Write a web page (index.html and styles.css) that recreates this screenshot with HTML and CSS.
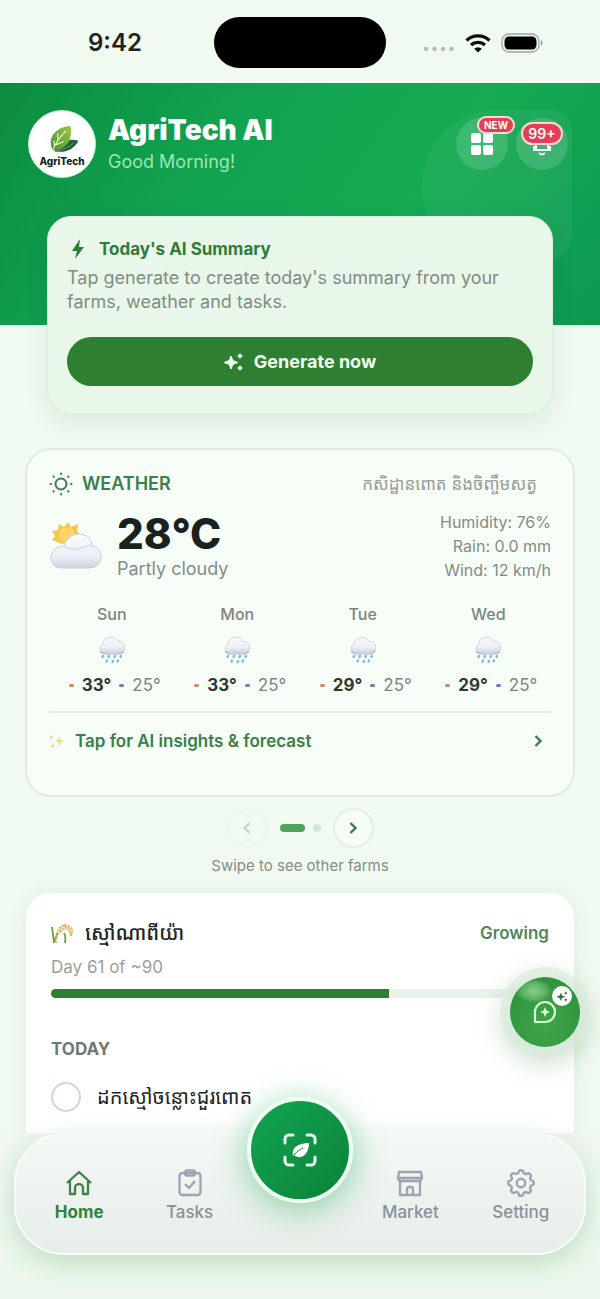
FILE: index.html
```html
<!DOCTYPE html>
<html lang="en">
<head>
<meta charset="utf-8">
<meta name="viewport" content="width=device-width, initial-scale=1">
<title>AgriTech AI</title>
<link rel="stylesheet" href="styles.css">
</head>
<body>
<svg class="defs" width="0" height="0" aria-hidden="true">
  <defs>
    <linearGradient id="cloud" x1="0" y1="0" x2="0" y2="1"><stop offset="0" stop-color="#fafbfd"/><stop offset=".65" stop-color="#eceff6"/><stop offset="1" stop-color="#cdd2df"/></linearGradient>
    <linearGradient id="leaf" x1="0" y1="1" x2="1" y2="0"><stop offset="0" stop-color="#4e9136"/><stop offset="1" stop-color="#97c73f"/></linearGradient>
    <symbol id="rain" viewBox="0 0 28 28">
      <path d="M5 17a5 5 0 0 1 0-9A8 8 0 0 1 20 5.500 6 6 0 0 1 23 17z" fill="url(#cloud)" stroke="#c9ced8" stroke-width=".8"/>
      <path d="M2 15q2 3 6 3h12q4 0 6-3" fill="none" stroke="#a9b5c6" stroke-width="1.200"/>
      <path d="M5 20l-.5 1M11 20l-.5 1M17 20l-.5 1M23 20l-.5 1M9 24.500l-.5 1M15 25l-.5 1M20 24.500l-.5 1" stroke="#73b6df" stroke-width="2.200" stroke-linecap="round"/>
    </symbol>
    <symbol id="chevron" viewBox="0 0 12 16"><path d="M3.500 3l5 5-5 5" fill="none" stroke="currentColor" stroke-width="2.400"/></symbol>
    <symbol id="sparkle" viewBox="0 0 20 20"><path d="M7 4l1.900 4.600L14 10.500l-5.100 1.900L7 17l-1.900-4.600L0 10.500l5.100-1.900z" fill="currentColor" stroke="currentColor"/><path d="M16 1l1.200 1.800L19 4l-1.800 1.200L16 7l-1.200-1.800L13 4l1.800-1.200zM16 13l1.200 1.800L19 16l-1.800 1.200L16 19l-1.200-1.800L13 16l1.800-1.200z" fill="currentColor"/></symbol>
  </defs>
</svg>
<div class="app">
  <div class="status">
    <time class="clock">9:42</time>
    <div class="island"></div>
    <div class="signals">
      <svg width="32" height="6" viewBox="0 0 32 6" fill="#b9bdb9"><circle cx="3" cy="3" r="2.300"/><circle cx="11.500" cy="3" r="2.300"/><circle cx="20" cy="3" r="2.300"/><circle cx="28.500" cy="3" r="2.300"/></svg>
      <svg class="wifi" width="26" height="20" viewBox="0 0 26 20" fill="none" stroke="#0b0f0c" stroke-width="3.400"><path d="M1.500 7.500a16.500 16.500 0 0 1 23 0M6 12a10.500 10.500 0 0 1 14 0"/><path d="M13 19.500l-3.800-3.700a5.500 5.500 0 0 1 7.600 0z" fill="#0b0f0c" stroke="none"/></svg>
      <svg width="43" height="20" viewBox="0 0 43 20"><rect x="1" y="1" width="37" height="18" rx="7" fill="none" stroke="#b4b9b4" stroke-width="1.800"/><rect x="3.500" y="3.500" width="32" height="13" rx="4.500" fill="#000"/><path d="M40 7q3 3 0 6z" fill="#8c918c"/></svg>
    </div>
  </div>

  <main class="content">
    <header class="hero">
      <div class="glow"></div>
      <div class="logo">
        <svg width="46" height="32" viewBox="0 0 46 32" aria-hidden="true"><path d="M14 31C27 33 37 29 43 18c-12-3-23 0-29 13z" fill="#23613f"/><path d="M12 30C4 15 15 2 33 0c4 17-5 29-21 30z" fill="url(#leaf)"/><path d="M11 31Q18 15 28 6M14 25l-1-7M18 18V9M16 23l9-4" fill="none" stroke="#edf7d6" stroke-width="1.300"/><path d="M15 31q14-3 22-10" fill="none" stroke="#72a37b"/></svg>
        <span>AgriTech</span>
      </div>
      <div class="brand">
        <h1>AgriTech AI</h1>
        <p>Good Morning!</p>
      </div>
      <div class="actions">
        <button class="round" aria-label="Apps"><svg width="22" height="22" viewBox="0 0 22 22" fill="#fff"><rect width="10" height="10" rx="2"/><rect x="12" width="10" height="10" rx="2"/><rect y="12" width="10" height="10" rx="2"/><rect x="12" y="12" width="10" height="10" rx="2"/></svg><span class="badge new">NEW</span></button>
        <button class="round" aria-label="Notifications"><svg width="22" height="24" viewBox="0 0 22 24" fill="none" stroke="#fff" stroke-width="2"><path d="M5 17V9a6 6 0 0 1 12 0v8M3 14v4h16v-4M8 21q3 3 6 0"/></svg><span class="badge count">99+</span></button>
      </div>
    </header>

    <section class="summary">
      <h2><svg width="22" height="22" viewBox="0 0 22 22" fill="currentColor" aria-hidden="true"><path d="M13 1L5 13h5l-2 8 9-12h-5z"/></svg>Today's AI Summary</h2>
      <p>Tap generate to create today's summary from your farms, weather and tasks.</p>
      <button class="generate"><svg width="20" height="20" aria-hidden="true"><use href="#sparkle"/></svg>Generate now</button>
    </section>

    <section class="weather">
      <div class="row">
        <h2><svg width="24" height="24" viewBox="0 0 24 24" fill="none" stroke="currentColor" stroke-width="2" stroke-linecap="round" aria-hidden="true"><circle cx="12" cy="12" r="5.500"/><path d="M12 1.500v.5M12 22v.5M1.500 12h.5M22 12h.5M4.500 4.500l.4.400M19.100 19.100l.4.400M4.500 19.500l.4-.4M19.100 4.900l.4-.4"/></svg>WEATHER</h2>
        <span class="place" lang="km">កសិដ្ឋានពោត និងចិញ្ចឹមសត្វ</span>
      </div>
      <div class="now">
        <svg width="54" height="48" viewBox="0 0 54 48" aria-hidden="true"><path d="M19 0l3 5 7-3-1 7 3 4-18 9-7-3-3-1 3-4-3-5 6-1 1-6 5 3z" fill="#f6c64b"/><circle cx="18" cy="13" r="8" fill="#fbd367"/><path d="M11 46a10 10 0 0 1-5-18q2-4 9-4 4-12 15-12 12 0 13 12 10 2 9 12-1 9-11 10z" fill="url(#cloud)" stroke="#cbd0dc"/><path d="M15 24q7 5 17 2 9-4 11-2" fill="none" stroke="#dfe2eb" stroke-width="2"/></svg>
        <div class="temperature"><strong>28°C</strong><span>Partly cloudy</span></div>
        <div class="details"><span>Humidity: 76%</span><span>Rain: 0.0 mm</span><span>Wind: 12 km/h</span></div>
      </div>
      <div class="days">
        <div class="day"><b>Sun</b><svg width="28" height="28"><use href="#rain"/></svg><p><i class="hi"></i><strong>33°</strong><i class="lo"></i>25°</p></div>
        <div class="day"><b>Mon</b><svg width="28" height="28"><use href="#rain"/></svg><p><i class="hi"></i><strong>33°</strong><i class="lo"></i>25°</p></div>
        <div class="day"><b>Tue</b><svg width="28" height="28"><use href="#rain"/></svg><p><i class="hi"></i><strong>29°</strong><i class="lo"></i>25°</p></div>
        <div class="day"><b>Wed</b><svg width="28" height="28"><use href="#rain"/></svg><p><i class="hi"></i><strong>29°</strong><i class="lo"></i>25°</p></div>
      </div>
      <a class="insights" href="#"><svg class="gold" width="16" height="18" viewBox="0 0 20 20" aria-hidden="true"><path d="M13 4l1.500 4.500L19 10l-4.500 1.500L13 17l-1.500-5.500L7 10l4.500-1.500zM3 2l1 2.500L6 5 4 6 3 9 2 6 0 5l2-.5zM5 13l1 2 2 1-2 1-1 2-1-2-2-1 2-1z" fill="currentColor"/></svg><span>Tap for AI insights &amp; forecast</span><svg class="go" width="12" height="16"><use href="#chevron"/></svg></a>
    </section>

    <div class="pager">
      <button class="page prev" aria-label="Previous farm"><svg width="12" height="16" viewBox="0 0 12 16"><path d="M8.500 3l-5 5 5 5" fill="none" stroke="currentColor" stroke-width="2.400"/></svg></button>
      <span class="dash"></span><span class="dot"></span>
      <button class="page" aria-label="Next farm"><svg width="12" height="16"><use href="#chevron"/></svg></button>
    </div>
    <p class="hint">Swipe to see other farms</p>

    <section class="farm">
      <div class="row">
        <h2 lang="km"><svg width="22" height="22" viewBox="0 0 22 22" fill="none" stroke-width="1.800" aria-hidden="true"><path d="M3 21Q2 12 1 5M3 21q2-7 4-10M14 21q1-7-1-10" stroke="#719c4a"/><path d="M5 21Q6 2 15 4t5 8M9 10q3-5 8-3 3 3 3 7M14 4l-1-3M17 5l2-2" stroke="#dfb76a" stroke-dasharray="2 1" stroke-width="2.500"/></svg>ស្មៅណាពីយ៉ា</h2>
        <span class="stage">Growing</span>
      </div>
      <p class="age">Day 61 of ~90</p>
      <div class="track" role="progressbar" aria-label="Growth" aria-valuenow="61" aria-valuemin="0" aria-valuemax="90"><div class="fill" style="width: 67.800%"></div></div>
      <h3>TODAY</h3>
      <label class="task"><input type="checkbox"><span lang="km">ដកស្មៅចន្លោះជួរពោត</span></label>
    </section>
  </main>

  <button class="chat" aria-label="Ask the assistant">
    <svg width="26" height="26" viewBox="0 0 26 26" fill="none" stroke="#d9ffd9" stroke-width="2.200" aria-hidden="true"><path d="M3 23V13a10 10 0 1 1 10 10z" stroke-linejoin="round"/><path d="M13 8l1.500 3.500L18 13l-3.500 1.500L13 18l-1.500-3.500L8 13l3.500-1.500z" fill="#d9ffd9" stroke="none"/></svg>
    <span class="spark"><svg width="11" height="11"><use href="#sparkle" width="11" height="11"/></svg></span>
  </button>

  <div class="dock">
    <nav class="nav">
      <a class="tab active" href="#"><svg width="28" height="28" viewBox="0 0 28 28"><path d="M2 14L14 3l12 11M5 12v13h5v-6a4 4 0 0 1 8 0v6h5V12"/></svg>Home</a>
      <a class="tab" href="#"><svg width="28" height="28" viewBox="0 0 28 28"><rect x="3.500" y="4" width="21" height="22" rx="3"/><rect x="9" y="1.500" width="10" height="5" rx="2"/><path d="M9 15l4 4 6-7"/></svg>Tasks</a>
      <button class="scan" aria-label="Scan a plant"><svg width="34" height="34" viewBox="0 0 34 34" fill="none" stroke="#e8fff0" stroke-width="3" stroke-linecap="round"><path d="M2 10V6a4 4 0 0 1 4-4h4M24 2h4a4 4 0 0 1 4 4v4M32 24v4a4 4 0 0 1-4 4h-4M10 32H6a4 4 0 0 1-4-4v-4"/><path d="M10 23C8 15 15 10 26 10c0 10-6 17-14 13z" fill="#fff" stroke="none"/><path d="M9 25q4-7 11-10" stroke="#0d9a45" stroke-width="1"/></svg></button>
      <a class="tab" href="#"><svg width="28" height="28" viewBox="0 0 28 28"><path d="M3 3h22l1 6q-1 3-3 3H5Q2 12 2 9zM2 9h24M4 12v14h20V12M11 26v-6q0-2 2-2h2q2 0 2 2v6"/></svg>Market</a>
      <a class="tab" href="#"><svg width="30" height="30" viewBox="0 0 24 24" class="gear"><path d="M10.300 4.300c.4-1.800 3-1.800 3.400 0a1.700 1.700 0 0 0 2.600 1.100c1.500-.9 3.300.8 2.400 2.400a1.700 1.700 0 0 0 1 2.500c1.800.4 1.800 3 0 3.400a1.700 1.700 0 0 0-1 2.600c.9 1.500-.9 3.300-2.400 2.400a1.700 1.700 0 0 0-2.600 1c-.4 1.800-3 1.800-3.400 0a1.700 1.700 0 0 0-2.600-1c-1.500.9-3.300-.9-2.400-2.400a1.700 1.700 0 0 0-1-2.600c-1.800-.4-1.800-3 0-3.400a1.700 1.700 0 0 0 1-2.600c-.9-1.500.9-3.300 2.400-2.400 1 .6 2.300.1 2.600-1z"/><circle cx="12" cy="12" r="3"/></svg>Setting</a>
    </nav>
  </div>
</div>
</body>
</html>
```
FILE: styles.css
```css
* { box-sizing: border-box; }
body { margin: 0; background: #f1faf1; font-family: Inter, "Noto Sans Khmer", "Noto Sans", sans-serif; color: #1c251f; }
h1, h2, h3, p { margin: 0; }
button { border: 0; padding: 0; font: inherit; color: inherit; cursor: pointer; }
a { text-decoration: none; color: inherit; }
svg { flex: none; }
.defs { position: absolute; }
.app { position: relative; height: 100vh; display: flex; flex-direction: column; overflow: hidden; }

.status { flex: none; height: 83px; padding: 2px 56px 0; display: grid; grid-template-columns: 1fr 172px 1fr; align-items: center; }
.clock { padding-left: 32px; font-size: 24px; font-weight: 600; }
.island { height: 51px; border-radius: 26px; background: #000; }
.signals { display: flex; align-items: center; justify-content: flex-end; gap: 10px; }
.signals svg:first-child { margin-top: 12px; }

.content { flex: 1; min-height: 0; overflow: hidden; }
.hero { position: relative; height: 242px; padding: 27px 32px 0 28px; display: flex; align-items: flex-start; gap: 12px; background: linear-gradient(125deg, #0b8c41 0%, #12a350 35%, #15aa53 65%, #0b9950 100%); }
.glow { position: absolute; top: 27px; right: 28px; width: 150px; height: 154px; border-radius: 76px 20px 32px 76px; background: rgba(255, 255, 255, .05); }
.logo { width: 68px; height: 68px; border-radius: 50%; background: #fff; border: 1px solid #bdf0cc; display: flex; flex-direction: column; align-items: center; padding-top: 12px; }
.logo svg { width: 38px; height: 32px; }
.logo span { color: #14231b; font-size: 10px; font-weight: 800; line-height: 12px; }
.brand { flex: 1; padding-top: 4px; }
.brand h1 { color: #fff; font-size: 28px; line-height: 32px; font-weight: 900; }
.brand p { margin-top: 4px; color: #99e9b0; font-size: 18px; line-height: 24px; }
.actions { position: relative; display: flex; gap: 8px; padding-top: 8px; }
.round { position: relative; width: 52px; height: 52px; border-radius: 50%; background: rgba(255, 255, 255, .14); display: grid; place-items: center; }
.badge { position: absolute; color: #fff; background: #e43f55; border: 2px solid #ffd8d7; border-radius: 12px; font-weight: 700; text-align: center; }
.new { top: -2px; left: 21px; width: 38px; font-size: 10px; line-height: 14px; }
.count { top: 4px; left: 5px; width: 42px; font-size: 14px; line-height: 19px; font-weight: 600; }

.summary { position: relative; margin: -109px 47px 0; padding: 20px 19px 27px; border: 1px solid #deeee1; border-radius: 24px; background: #e9f6ea; box-shadow: 0 8px 24px rgba(24, 54, 29, .09); }
.summary h2 { display: flex; align-items: center; gap: 10px; color: #2e7d36; font-size: 17px; line-height: 24px; font-weight: 700; }
.summary p { color: #818d83; font-size: 18px; line-height: 24px; margin: 5px 0 23px; }
.generate { width: 100%; height: 49px; border-radius: 25px; background: #2e7f32; color: #f1fff1; display: flex; align-items: center; justify-content: center; gap: 10px; font-size: 18px; font-weight: 700; }

.weather { margin: 34px 25px 0; height: 349px; border: 2px solid #e1ebe1; border-radius: 26px; padding: 20px 22px; background: #f7fdf7; }
.row { display: flex; align-items: center; justify-content: space-between; }
.weather h2 { display: flex; align-items: center; gap: 9px; color: #39804a; font-size: 18px; line-height: 28px; font-weight: 600; }
.place { margin-right: 14px; color: #979e98; font-size: 17px; line-height: 28px; }
.now { display: flex; align-items: center; height: 80px; margin-top: 8px; gap: 14px; }
.temperature { flex: 1; display: flex; flex-direction: column; color: #858c86; font-size: 18px; line-height: 24px; }
.temperature strong { color: #19221d; font-size: 42px; line-height: 46px; font-weight: 800; }
.details { display: flex; flex-direction: column; align-items: flex-end; color: #858c86; font-size: 16px; line-height: 24px; }
.days { display: grid; grid-template-columns: repeat(4, 1fr); padding: 18px 0 15px; }
.day { display: flex; flex-direction: column; align-items: center; color: #7c857e; }
.day b { font-size: 16px; line-height: 20px; font-weight: 500; margin-bottom: 12px; }
.day p { display: flex; align-items: center; margin: 10px 0 0 6px; font-size: 17px; line-height: 22px; }
.day strong { color: #303832; font-weight: 700; }
.day i { width: 5px; height: 3px; border-radius: 2px; margin: 0 8px; }
.day .hi { margin-left: 0; background: #cd8a5e; }
.day .lo { background: #6287a7; }
.insights { display: flex; align-items: center; border-top: 2px solid #e4ebe4; padding-top: 16px; gap: 10px; color: #39804a; font-size: 17px; line-height: 24px; font-weight: 600; }
.gold { color: #eddc80; }
.go { margin: 0 7px 0 auto; }

.pager { margin-top: 11px; display: flex; align-items: center; justify-content: center; height: 40px; }
.page { width: 41px; height: 40px; border: 2px solid #e6ede6; border-radius: 50%; background: #f6fcf6; color: #4a7353; display: grid; place-items: center; }
.prev { color: #cad3cb; border-color: #edf5ed; background: transparent; }
.dash { margin: 0 8px 0 12px; width: 25px; height: 8px; border-radius: 4px; background: #4ca558; }
.dot { margin-right: 12px; width: 8px; height: 8px; border-radius: 50%; background: #d6e4d7; }
.hint { margin-top: 8px; color: #858c86; font-size: 15px; line-height: 20px; text-align: center; }

.farm { margin: 17px 26px 0; height: 360px; padding: 24px 25px; border-radius: 24px; background: #fff; box-shadow: 0 0 20px rgba(36, 67, 39, .08); }
.farm h2 { display: flex; align-items: center; gap: 12px; font-size: 20px; line-height: 32px; font-weight: 500; }
.stage { color: #508558; font-size: 17px; font-weight: 600; }
.age { margin-top: 6px; color: #9a9f9b; font-size: 17px; line-height: 24px; }
.track { margin-top: 10px; height: 9px; border-radius: 5px; background: #ebf2eb; overflow: hidden; }
.fill { height: 100%; background: #2e7f32; }
.farm h3 { margin-top: 39px; color: #707872; font-size: 17px; line-height: 24px; font-weight: 700; }
.task { display: flex; align-items: center; gap: 16px; margin-top: 20px; font-size: 20px; line-height: 32px; }
.task input { appearance: none; margin: 0; width: 30px; height: 30px; border: 2px solid #ccdacd; border-radius: 50%; }

.chat { position: absolute; right: 20px; bottom: 252px; width: 70px; height: 70px; border-radius: 50%; background: radial-gradient(ellipse 18px 12px at 34% 20%, #8ccb8d 0%, rgba(113, 189, 115, .65) 70%, transparent 100%), radial-gradient(circle at 50% 70%, #41a548, #278f3b); box-shadow: 0 0 0 10px rgba(218, 235, 220, .65), 0 8px 26px 8px rgba(50, 125, 60, .25); display: grid; place-items: center; }
.spark { position: absolute; right: 8px; top: 9px; width: 20px; height: 20px; border-radius: 50%; background: #fff; color: #356c3c; display: grid; place-items: center; }

.dock { flex: none; position: relative; height: 166px; padding: 0 14px; background: linear-gradient(#f0f7f0, #edf7ed); }
.nav { position: relative; height: 122px; border-radius: 50px; border: 2px solid #f7fcf8; background: linear-gradient(#f3f8f4, #e7ede8); box-shadow: 0 8px 26px rgba(28, 129, 54, .22); display: grid; grid-template-columns: 1fr 1fr 1fr 1fr 1fr; padding: 31px 8px 0; align-items: start; }
.tab { display: flex; flex-direction: column; align-items: center; justify-content: flex-end; gap: 5px; height: 56px; color: #89929b; font-size: 17px; line-height: 20px; font-weight: 500; }
.tab svg { width: 28px; height: 28px; fill: none; stroke: #9ca4b2; stroke-width: 2.300; stroke-linejoin: round; }
.tab .gear { width: 34px; height: 34px; stroke-width: 1.700; margin: -3px; }
.tab.active { color: #32823b; font-weight: 700; }
.tab.active svg { stroke: #418047; }
.scan { justify-self: center; width: 106px; height: 106px; margin-top: -69px; border: 4px solid #ecfff1; border-radius: 50%; background: linear-gradient(135deg, #12a552, #0b8138); box-shadow: 0 6px 30px 4px rgba(17, 161, 75, .35); display: grid; place-items: center; }
```
